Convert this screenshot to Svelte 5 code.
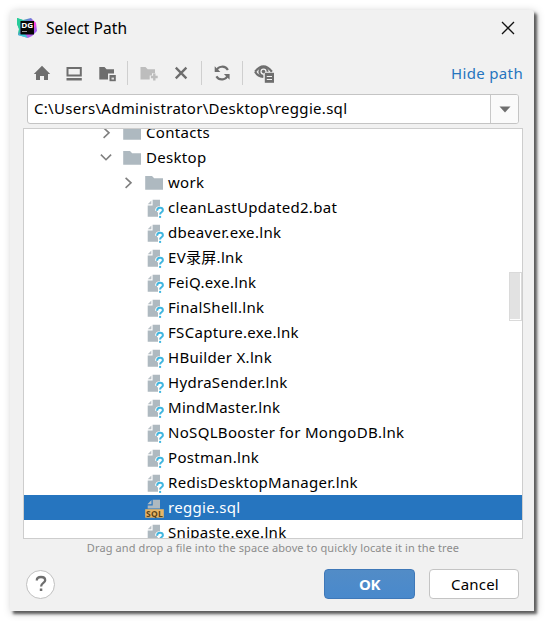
<script>
  const rows = [
    { name: 'Contacts', depth: 0, kind: 'folder', arrow: 'right' },
    { name: 'Desktop', depth: 0, kind: 'folder', arrow: 'down' },
    { name: 'work', depth: 1, kind: 'folder', arrow: 'right' },
    { name: 'cleanLastUpdated2.bat', depth: 1, kind: 'file' },
    { name: 'dbeaver.exe.lnk', depth: 1, kind: 'file' },
    { name: 'EV录屏.lnk', depth: 1, kind: 'file' },
    { name: 'FeiQ.exe.lnk', depth: 1, kind: 'file' },
    { name: 'FinalShell.lnk', depth: 1, kind: 'file' },
    { name: 'FSCapture.exe.lnk', depth: 1, kind: 'file' },
    { name: 'HBuilder X.lnk', depth: 1, kind: 'file' },
    { name: 'HydraSender.lnk', depth: 1, kind: 'file' },
    { name: 'MindMaster.lnk', depth: 1, kind: 'file' },
    { name: 'NoSQLBooster for MongoDB.lnk', depth: 1, kind: 'file' },
    { name: 'Postman.lnk', depth: 1, kind: 'file' },
    { name: 'RedisDesktopManager.lnk', depth: 1, kind: 'file' },
    { name: 'reggie.sql', depth: 1, kind: 'sql' },
    { name: 'Snipaste.exe.lnk', depth: 1, kind: 'file' }
  ];
  let selected = $state('reggie.sql');
</script>

<main class="dialog">
  <header>
    <svg class="logo" width="20" height="20" viewBox="0 0 20 20">
      <defs>
        <linearGradient id="dg" x1="0" y1="0.2" x2="1" y2="0.8">
          <stop offset="0" stop-color="#22d88f" />
          <stop offset="0.4" stop-color="#6b7ad8" />
          <stop offset="0.7" stop-color="#c45ce8" />
          <stop offset="1" stop-color="#8f62f5" />
        </linearGradient>
      </defs>
      <path d="M0 0 6 2 14 0 19 5 20 13 15 18 11 20 1 17 2 11 0 6Z" fill="url(#dg)" />
      <path d="M0 0 6 2 3 6 3 14 1 17 2 11 0 6Z" fill="#28cc9a" />
      <path d="M3 16 8 16 11 20 1 17Z" fill="#3bcdd8" />
      <path d="M15 2 19 5 18 10 15 6Z" fill="#ff45e6" />
      <rect x="3.5" y="3" width="13.5" height="13.5" fill="#060606" />
      <text x="4.3" y="10.2" class="dgt" textLength="12" lengthAdjust="spacingAndGlyphs">DG</text>
      <rect x="5" y="13" width="5" height="1" fill="#999" />
    </svg>
    <h1>Select Path</h1>
    <svg class="close" width="14" height="14" viewBox="0 0 14 14"><path d="M1 1 13 13M13 1 1 13" stroke="#111" stroke-width="1.3" fill="none" /></svg>
  </header>

  <nav>
    <svg width="20" height="20"><path d="M10 2.8 18.2 11H16V17H12V13H8V17H4V11H1.8Z" fill="#6e6e6e" /></svg>
    <svg class="g12" width="20" height="20"><path d="M3.5 5H16.8V12.5H3.5Z" fill="none" stroke="#6e6e6e" stroke-width="2" /><path d="M2.5 15H17.8V17.5H2.5Z" fill="#6e6e6e" /></svg>
    <svg class="g13" width="20" height="20">
      <path d="M2.3 4H7.5L9.6 6.2H17V10.6H11V16.5H2.3Z" fill="#6e6e6e" />
      <path d="M12.5 12H18.8V18.2H12.5Z" fill="#6e6e6e" /><path d="M14.5 14.6H17V16.5H14.5Z" fill="#ddd" />
    </svg>
    <i class="s1"></i>
    <svg class="g11" width="20" height="20">
      <path d="M1.5 4H6.5L8.7 6.2H16V10.2H13V12.6H10.7V16.6H1.5Z" fill="#bdbdbd" />
      <path d="M15.3 10.6V17.4M11.9 14H18.7" stroke="#bdbdbd" stroke-width="2.4" />
    </svg>
    <svg class="g12" width="20" height="20"><path d="M4.8 4.6 15.4 15.4M15.4 4.6 4.8 15.4" stroke="#6e6e6e" stroke-width="2.3" /></svg>
    <i class="s2"></i>
    <svg class="g10" width="20" height="20">
      <path d="M4.2 8.2A6.4 6.4 0 0 1 15.9 7M16 11.8A6.4 6.4 0 0 1 4.4 13.4" fill="none" stroke="#6e6e6e" stroke-width="2.2" />
      <path d="M2.7 3.2V9H8.4ZM17.6 16.8V11H11.9Z" fill="#6e6e6e" />
    </svg>
    <i class="s2"></i>
    <svg class="g10" width="22" height="20">
      <path d="M2.1 8.7Q10.5-2 18.9 8.7M2.1 8.7Q5 13.7 10.3 13.8" fill="none" stroke="#6e6e6e" stroke-width="2.2" />
      <path d="M14.6 8.7A4.1 4.1 0 1 0 10.2 12.8" fill="none" stroke="#6e6e6e" stroke-width="2" /><circle cx="10.5" cy="8.6" r="1.8" fill="#6e6e6e" />
      <rect x="11.8" y="9.8" width="9.2" height="10" fill="#6e6e6e" />
      <path d="M13.8 13.5H19M13.8 16.5H19" stroke="#f2f2f2" stroke-width="1.2" />
    </svg>
    <a href="#path">Hide path</a>
  </nav>

  <div class="combo">
    <span>C:\Users\Administrator\Desktop\reggie.sql</span>
    <button aria-label="Recent paths"><svg width="12" height="7"><path d="M.5.5H11.5L6 6.5Z" fill="#6e6e6e" /></svg></button>
  </div>

  <section class="tree">
    <div class="rows">
      {#each rows as row}
        <div class="row" class:nested={row.depth === 1} class:selected={selected === row.name}>
          <svg class="arrow" width="12" height="12" viewBox="0 0 12 12">
            {#if row.arrow === 'right'}
              <path d="M3.6 .8 9 5.8 3.6 10.8" />
            {:else if row.arrow === 'down'}
              <path d="M.9 2.6 6 7.7 11.1 2.6" />
            {/if}
          </svg>
          <svg class="icon" width="20" height="20" viewBox="0 0 20 20">
            {#if row.kind === 'folder'}
              <path d="M1.2 3H8L10.2 5.3H19V16.8H1.2Z" fill="#aeb9c0" />
            {:else if row.kind === 'file'}
              <path d="M3.7 6.2 7.4 2.4V6.2Z" fill="#b8c0c6" />
              <path d="M8.6 1.8H16V8.3C12.5 8.4 11 10 11.1 12.8H13V14.2H14V18.8H3.7V7.4H8.6Z" fill="#aeb9c0" />
              <path d="M13.1 12.8C13.1 10.7 14.3 9.8 16 9.8C17.8 9.8 18.9 10.8 18.9 12.2C18.9 14.2 16.1 14.2 16.1 16.2V16.6" fill="none" stroke="#40b6e0" stroke-width="2" />
              <rect x="15.1" y="17.9" width="2" height="2" fill="#40b6e0" />
            {:else}
              <path d="M3.4 6.3 7.5 2.1V6.3Z" fill="#b8c0c6" />
              <path d="M8.7 1.8H16V10.5H3.7V7.4H8.7Z" fill="#aeb9c0" />
              <rect x="1.2" y="11.2" width="18.6" height="8.5" fill="#e8b666" />
              <text x="2.1" y="18.5" class="sqlt" textLength="16.8">SQL</text>
            {/if}
          </svg>
          <span>{row.name}</span>
        </div>
      {/each}
    </div>
    <div class="thumb"></div>
  </section>

  <p>Drag and drop a file into the space above to quickly locate it in the tree</p>

  <footer>
    <button class="help" aria-label="Help"><svg width="14" height="18" viewBox="0 0 14 18"><path d="M2.8 5.5C2.8 3 4.5 2 7 2C9.6 2 11.2 3.2 11.2 5.2C11.2 8 7.1 7.8 7.1 11.5" fill="none" stroke="#6e6e6e" stroke-width="2.3" /><rect x="5.8" y="13.5" width="2.5" height="2.5" fill="#6e6e6e" /></svg></button>
    <button class="ok">OK</button>
    <button class="cancel">Cancel</button>
  </footer>
</main>

<style>
  :global(body) { background: #fff; padding: 10px; overflow: hidden; }
  * { box-sizing: border-box; }
  svg { display: block; flex: none; }
  button { font: inherit; padding: 0; margin: 0; }
  .dialog {
    width: 524px; height: 601px; background: #f1f1f1; border-radius: 3px 3px 0 0;
    display: flex; flex-direction: column;
    font: 15px/20px "Noto Sans", "Noto Sans CJK SC", sans-serif; color: #000;
    box-shadow: 3px 3px 3px rgba(0,0,0,.58), 2px 2px 8px rgba(0,0,0,.25);
  }
  header { height: 50px; display: flex; align-items: flex-start; padding: 8px 19px 0 7px; }
  h1 { font-size: 15.5px; line-height: 20px; font-weight: 400; margin: 0 auto 0 9px; letter-spacing: .08px; }
  .close { margin-top: 3px; }
  .dgt { font: 700 7.4px "Open Sans", sans-serif; fill: #fff; }
  nav { height: 26px; display: flex; align-items: center; padding: 0 11px 0 22px; }
  nav a { margin-left: auto; color: #2675bf; text-decoration: none; line-height: 24px; letter-spacing: .35px; }
  nav i { width: 1px; height: 24px; background: #cfcfcf; flex: none; }
  .g10 { margin-left: 10px; }
  .g11 { margin-left: 11px; }
  .g12 { margin-left: 12px; }
  .g13 { margin-left: 13px; }
  .s1 { margin-left: 10px; }
  .s2 { margin-left: 10px; }
  .combo {
    margin: 8px 15px 0 17px; height: 30px; display: flex; background: #fff;
    border: 1px solid #c4c4c4; border-radius: 3px; overflow: hidden; flex: none;
  }
  .combo span { flex: 1; padding: 3px 0 0 6px; white-space: nowrap; letter-spacing: .3px; }
  .combo button { width: 28px; border: 0; border-left: 1px solid #c8c8c8; background: #fafafa; display: flex; align-items: center; justify-content: center; }
  .tree { position: relative; margin: 4px 11px 0 13px; height: 411px; border: 1px solid #cdcdcd; background: #fff; overflow: hidden; flex: none; }
  .rows { margin-top: -9px; }
  .row { height: 25px; display: flex; align-items: center; padding-left: 76px; white-space: nowrap; }
  .row span { padding-bottom: 2px; letter-spacing: .31px; }
  .row.nested { padding-left: 98px; }
  .row.selected { background: #2675bf; color: #fff; }
  .arrow { fill: none; stroke: #7f7f7f; stroke-width: 1.6; }
  .icon { margin: 0 4px 0 10px; }
  .sqlt { font: 700 8.5px "Open Sans", sans-serif; fill: #5c4418; }
  .thumb { position: absolute; right: 0; top: 143px; width: 13px; height: 49px; background: #e2e2e2; border: 1px solid #dadada; box-shadow: inset -1px -1px #fff; }
  p { margin: 0; text-align: center; padding-left: 2px; font-size: 11px; line-height: 18px; color: #8c8c8c; white-space: nowrap; letter-spacing: .11px; }
  footer { display: flex; align-items: center; padding: 0 15px 0 16px; margin-top: 12px; height: 30px; }
  .help { width: 29px; height: 29px; border-radius: 50%; border: 1px solid #c0c0c0; background: #fff; margin-right: auto; display: flex; align-items: center; justify-content: center; }
  .ok { width: 91px; height: 30px; border-radius: 4px; border: 1px solid #3f78b8; background: linear-gradient(#528cc7, #4989cc); color: #fff; font-weight: 700; letter-spacing: -.3px; }
  .cancel { width: 90px; height: 30px; margin-left: 14px; padding-left: 2px; border-radius: 4px; border: 1px solid #c4c4c4; background: #fff; color: #000; letter-spacing: .2px; }
</style>
